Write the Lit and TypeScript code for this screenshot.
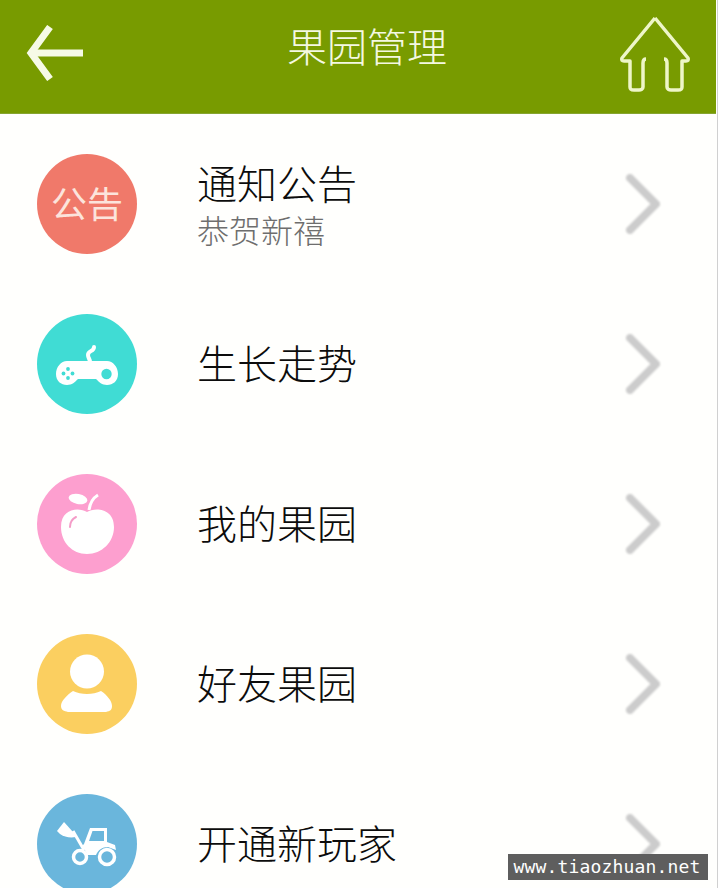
import { LitElement, html, css, svg } from "lit";
import { customElement } from "lit/decorators.js";

const icons: Record<string, unknown> = {
  game: svg`<path d="M30 47h40c6 0 11 6 11 13s-5 11-11 11c-5 0-8-3-11-6H41c-3 3-6 6-11 6-6 0-11-4-11-11s5-13 11-13z" fill="#fff"/>
    <path d="M53 48c0-3-2-4-2-7 0-2 1-3 3-4s3-2 3-4" fill="none" stroke="#fff" stroke-width="4" stroke-linecap="round"/>
    <g fill="#40dcd4"><circle cx="31" cy="55" r="1.9"/><circle cx="31" cy="64" r="1.9"/><circle cx="26.5" cy="59.5" r="1.9"/><circle cx="35.5" cy="59.5" r="1.9"/><circle cx="69.5" cy="60" r="5.2"/></g>`,
  apple: svg`<path d="M50 38c8-5 27-4 27 15 0 15-12 27-27 27S24 68 24 53c0-19 18-20 26-15z" fill="#fff"/>
    <ellipse cx="41" cy="25" rx="9.5" ry="5" transform="rotate(10 41 25)" fill="#fff"/>
    <path d="M52 36c1-7 4-12 9-15" fill="none" stroke="#fff" stroke-width="3"/>
    <path d="M33 53c0-4 2-8 6-10" fill="none" stroke="#f49cc8" stroke-width="2" stroke-linecap="round"/>`,
  person: svg`<circle cx="50" cy="37.5" r="17" fill="#fff"/>
    <path d="M36 57c8 4 20 4 28 0 6 4 11 10 11 15 0 4-2 5-6 6H31c-4-1-7-2-7-6 0-5 6-11 12-15z" fill="#fff"/>`,
  tractor: svg`<path d="M20 37l7-9 9 10 3 5c-6 1-12 0-16-3z" fill="#fff"/>
    <path d="M36 37l11 19" fill="none" stroke="#fff" stroke-width="3"/>
    <path d="M47 50l6-16h17v14l8 3 1 5-8-3c-6 0-10 3-12 8h-9c-1-4-3-7-6-8z" fill="#fff"/>
    <path d="M55.5 37h11.5v10H52z" fill="#6ab6dc"/>
    <circle cx="43" cy="63" r="6.5" fill="none" stroke="#fff" stroke-width="3.5"/>
    <circle cx="70" cy="63" r="7.5" fill="none" stroke="#fff" stroke-width="3.5"/>`,
};

const rows = [
  { color: "#f0796a", title: "通知公告", sub: "恭贺新禧", badge: "公告" },
  { color: "#40dcd4", title: "生长走势", icon: "game" },
  { color: "#fd9fcf", title: "我的果园", icon: "apple" },
  { color: "#fbcf60", title: "好友果园", icon: "person" },
  { color: "#6ab6dc", title: "开通新玩家", icon: "tractor" },
];

@customElement("app-root")
export class AppRoot extends LitElement {
  static styles = css`
    :host {
      display: block;
      position: relative;
      height: 888px;
      overflow: hidden;
      background: #fffffd;
      font-family: "Noto Sans CJK SC", "Liberation Sans", sans-serif;
    }
    .edge {
      position: absolute;
      right: 0;
      top: 0;
      bottom: 0;
      width: 1px;
      background: #d0d0d0;
    }
    .bar {
      width: 716px;
      height: 114px;
      background: #789b00;
      border-bottom: 1px solid #86a530;
      display: grid;
      grid-template-columns: 1fr auto 1fr;
      align-items: center;
      box-sizing: border-box;
      padding: 0 26px;
    }
    .title {
      color: #f4f8e2;
      font-size: 40px;
      font-weight: 300;
      line-height: 48px;
      margin: -24px 0 0 18px;
    }
    .back { display: block; width: 58px; height: 56px; margin-top: -8px; }
    .home { display: block; width: 74px; height: 76px; justify-self: end; margin: -6px -2px 0 0; }
    .list { padding-top: 10px; }
    .row {
      height: 160px;
      display: flex;
      align-items: center;
      padding-left: 37px;
      padding-right: 56px;
    }
    .dot {
      width: 100px;
      height: 100px;
      border-radius: 50%;
      flex: none;
      display: flex;
      align-items: center;
      justify-content: center;
    }
    .dot svg { display: block; width: 100px; height: 100px; }
    .badge { color: #fce4dc; font-size: 36px; line-height: 40px; font-weight: 400; margin-bottom: 4px; }
    .text { flex: 1; margin-left: 60px; }
    .name { color: #0c0c0c; font-size: 40px; line-height: 44px; font-weight: 300; }
    .name:only-child { margin-bottom: 5px; }
    .sub { color: #6e6e6e; font-size: 32px; line-height: 38px; font-weight: 300; margin-top: 6px; }
    .chev { display: block; width: 38px; height: 64px; flex: none; filter: blur(1px); }
    .mark {
      position: absolute;
      left: 508px;
      top: 854px;
      width: 198px;
      padding-right: 2px;
      height: 26px;
      background: #5e5e5e;
      color: #fff;
      font-family: "DejaVu Sans Mono", monospace;
      font-size: 18px;
      letter-spacing: 0.16px;
      line-height: 26px;
      text-align: center;
    }
  `;

  render() {
    return html`
      <div class="bar">
        <svg class="back" viewBox="0 0 58 56" fill="none" stroke="#f6fae6" stroke-width="7">
          <path d="M57 28H6"/>
          <path d="M24 2L5 28l19 26"/>
        </svg>
        <div class="title">果园管理</div>
        <svg class="home" viewBox="0 0 74 76" fill="none" stroke="#eef6c8" stroke-width="3.5" stroke-linejoin="round">
          <path d="M37 2L70 42c1 2 0 3-2 3h-4v26c0 3-2 3-4 3h-7c-2 0-4-1-4-3V47c0-3-1-4-3-4M37 2L4 42c-1 2 0 3 2 3h6v26c0 3 2 3 4 3h5c2 0 4-1 4-3V47c0-3 1-4 3-4"/>
        </svg>
      </div>
      <div class="list">
        ${rows.map(
          (r) => html`
            <div class="row">
              <div class="dot" style="background:${r.color}">
                ${r.badge
                  ? html`<span class="badge">${r.badge}</span>`
                  : html`<svg viewBox="0 0 100 100">${icons[r.icon as string]}</svg>`}
              </div>
              <div class="text">
                <div class="name">${r.title}</div>
                ${r.sub ? html`<div class="sub">${r.sub}</div>` : ""}
              </div>
              <svg class="chev" viewBox="0 0 38 64" fill="none" stroke="#cccccc" stroke-width="8" stroke-linecap="round" stroke-linejoin="round">
                <path d="M6 6l26 26L6 58"/>
              </svg>
            </div>
          `
        )}
      </div>
      <div class="edge"></div>
      <div class="mark">www.tiaozhuan.net</div>
    `;
  }
}
